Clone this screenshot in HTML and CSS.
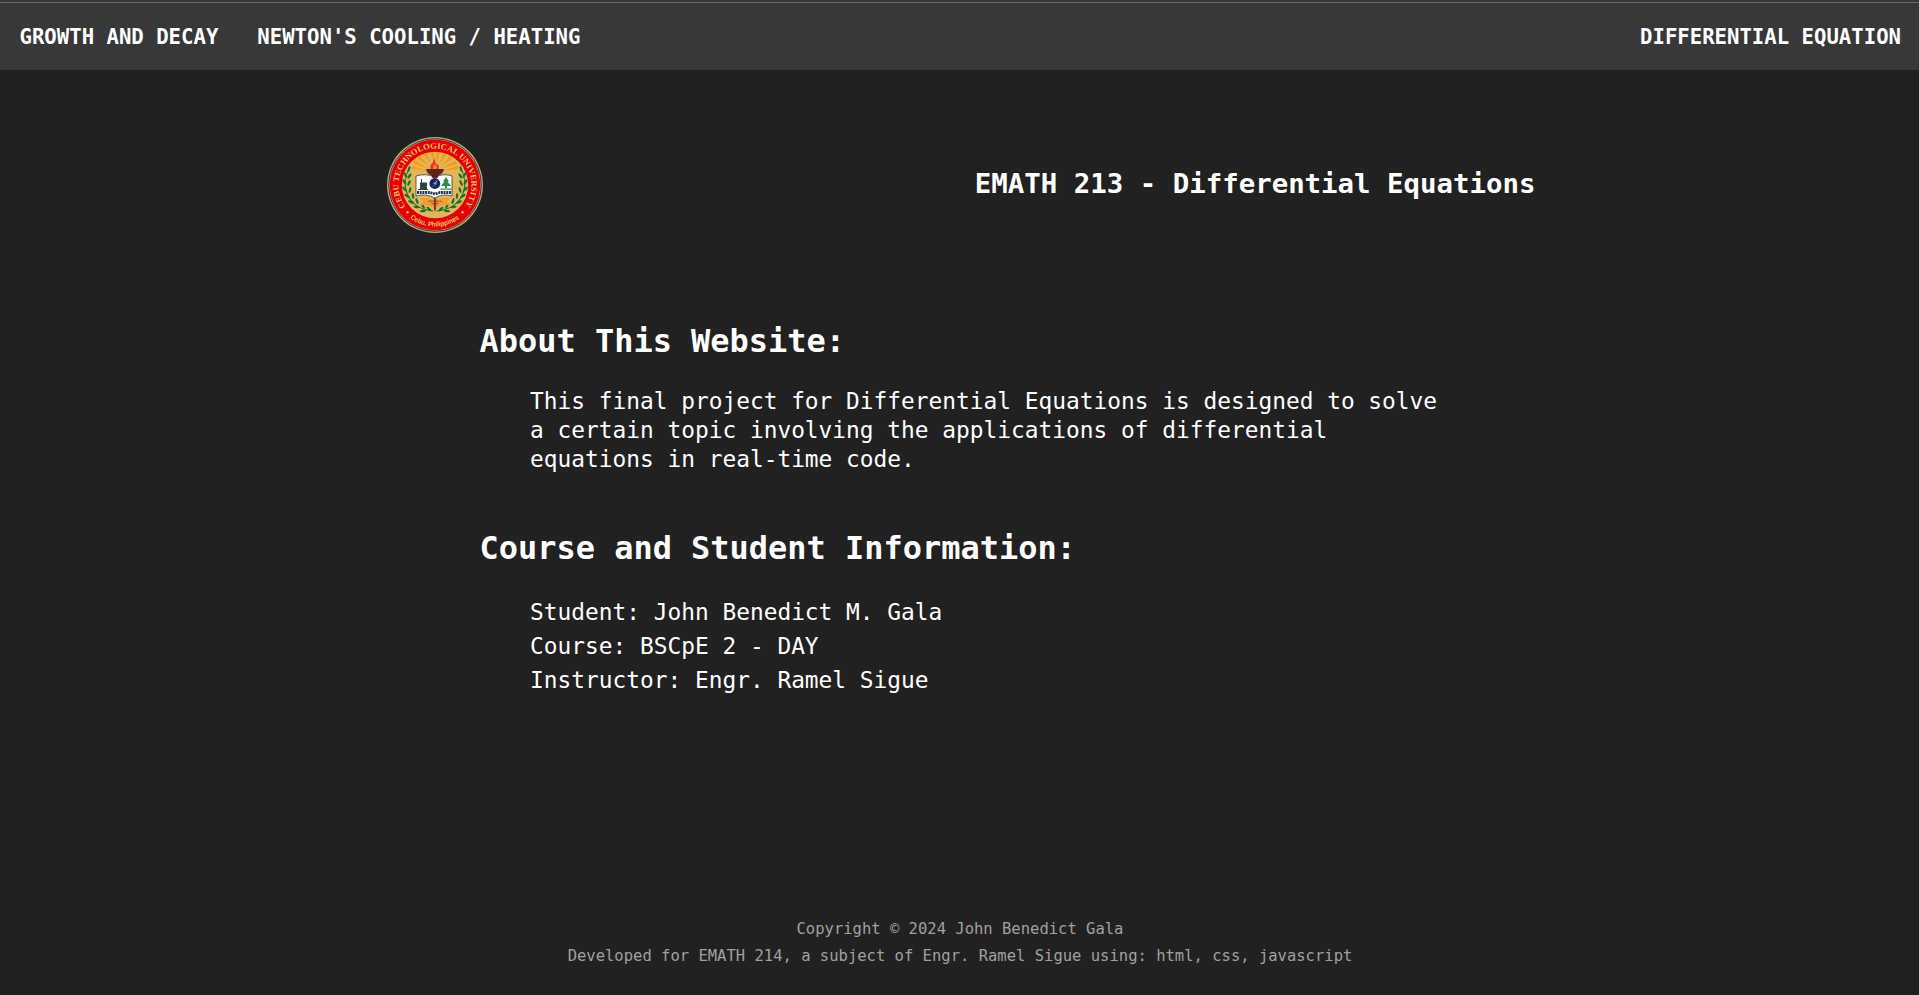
FILE: index.html
```html
<!DOCTYPE html>
<html lang="en">
<head>
<meta charset="utf-8">
<title>Differential Equation</title>
<link rel="stylesheet" href="styles.css">
</head>
<body>
<nav class="nav">
  <div class="nav-links"><a>GROWTH AND DECAY</a><a>NEWTON'S COOLING / HEATING</a></div>
  <a class="brand">DIFFERENTIAL EQUATION</a>
</nav>
<header class="header">
  <svg class="seal" viewBox="0 0 98 98" role="img" aria-label="Cebu Technological University">
    <defs>
      <path id="arc-top" d="M19.500 70.500A36.500 36.500 0 1 1 78.500 70.500"/>
      <path id="arc-bottom" d="M24.200 82.300A41.500 41.500 0 0 0 73.800 82.300"/>
      <ellipse id="leaf" rx="3.100" ry="1.200"/>
      <g id="branch">
        <path d="M24 31C14 47 19 72 47 75" fill="none" stroke="#16722b" stroke-width="1.100"/>
        <use href="#leaf" transform="translate(23 33) rotate(-75)"/><use href="#leaf" transform="translate(19.500 39) rotate(60)"/><use href="#leaf" transform="translate(23.500 40) rotate(-55)"/><use href="#leaf" transform="translate(18.500 46) rotate(55)"/><use href="#leaf" transform="translate(23 47) rotate(-65)"/><use href="#leaf" transform="translate(18.500 53) rotate(50)"/><use href="#leaf" transform="translate(24 54) rotate(-75)"/><use href="#leaf" transform="translate(21 60) rotate(35)"/><use href="#leaf" transform="translate(27 60) rotate(-95)"/><use href="#leaf" transform="translate(25 66) rotate(20)"/><use href="#leaf" transform="translate(31 65) rotate(-110)"/><use href="#leaf" transform="translate(30.500 71) rotate(10)"/><use href="#leaf" transform="translate(37 70) rotate(60)"/><use href="#leaf" transform="translate(37 75) rotate(-5)"/><use href="#leaf" transform="translate(43 73) rotate(40)"/>
      </g>
    </defs>
    <circle cx="49" cy="49" r="48" fill="#c6aa68"/>
    <circle cx="49" cy="49" r="46.300" fill="none" stroke="#38345e" stroke-width="1"/>
    <circle cx="49" cy="49" r="45.200" fill="#e3000b"/>
    <circle cx="49" cy="49" r="33.200" fill="#e0b65c"/>
    <path d="M42 35 26 32.500v-2.500zM43 33 26.500 27l1.800-3zM44 31 31 22l2.600-2.200zM45.500 29 37.500 18l3-1.200zM47.500 27 44.500 16h3.200zM50.500 27l.2-11h3.300zM52.500 29 57.500 17l3 1.400zM54 31 64.500 20l2.400 2.300zM55 33 69.500 24.500l1.500 3zM56 35 71.500 30l.3 2.700z" fill="#ff9610"/>
    <use href="#branch" fill="#16722b"/>
    <use href="#branch" fill="#16722b" transform="matrix(-1 0 0 1 98 0)"/>
    <path d="M30 40q10-3 19 1 9-4 17-1v20q-9-3-17 2-9-5-19-2z" fill="#fff" stroke="#35373e" stroke-width=".8"/>
    <path d="M31 56.500h13l5 1.500 5-1.500h11" fill="none" stroke="#26364c" stroke-width="2.800" stroke-dasharray="2 .7"/>
    <path d="M34 46.500h7v7h-7zM35 43h1v4h-1zM32 53h10v1H32z" fill="#29463f"/>
    <path d="M60 41l-3 4.500h1.500L55 50h4v3h2v-3h4l-3.500-4.500H63zM54.500 52.500h11v1.200h-11z" fill="#2d8c4c"/>
    <circle cx="48.800" cy="47.500" r="5.400" fill="#122377"/>
    <path d="M45.500 51.500 50 47.500l-3 .5 5-4.500-2.500 4 2-.2z" fill="#e7dc39"/>
    <path d="M34 62h8q7 3 14 0h8l-3 3.500 3 3.500h-8l-3 2h-8l-3-2h-8l3-3.500z" fill="#f09b38"/>
    <path d="M47.800 62h2.400v11l-1.200 3-1.200-3z" fill="#8b3d1c"/>
    <path d="M42.500 65.200h13M45.500 67.700h7" stroke="#713c1c" stroke-width="1" stroke-dasharray="1 .4"/>
    <path d="M40 33h18q-1 5-5 6l-1.500 3h-5L45 39q-4-1-5-6z" fill="#5b251b"/>
    <path d="M44.500 33q-1-4 2-6l2-5 1 5q5 2 3 6z" fill="#e93a18"/>
    <path d="M47 33q0-3 2-5 3 3 1 5z" fill="#f58b21"/>
    <text class="seal-top"><textPath href="#arc-top" textLength="159" lengthAdjust="spacingAndGlyphs">CEBU TECHNOLOGICAL UNIVERSITY</textPath></text>
    <text class="seal-bottom"><textPath href="#arc-bottom" textLength="52.5" lengthAdjust="spacingAndGlyphs">Cebu, Philippines</textPath></text>
    <circle cx="21.500" cy="76.300" r="1.200" fill="#f1bd52"/><circle cx="76.500" cy="76.300" r="1.200" fill="#f1bd52"/>
  </svg>
  <h1 class="title">EMATH 213 - Differential Equations</h1>
</header>
<main class="main">
  <h2>About This Website:</h2>
  <p>This final project for Differential Equations is designed to solve a certain topic involving the applications of differential equations in real-time code.</p>
  <h2>Course and Student Information:</h2>
  <ul><li>Student: John Benedict M. Gala</li><li>Course: BSCpE 2 - DAY</li><li>Instructor: Engr. Ramel Sigue</li></ul>
</main>
<footer class="footer">
  <div>Copyright © 2024 John Benedict Gala</div>
  <div>Developed for EMATH 214, a subject of Engr. Ramel Sigue using: html, css, javascript</div>
</footer>
</body>
</html>
```
FILE: styles.css
```css
* { box-sizing: border-box; margin: 0; padding: 0; }
body {
  height: 995px;
  display: flex;
  flex-direction: column;
  overflow: hidden;
  background: #212121;
  color: #fff;
  font-family: "DejaVu Sans Mono", monospace;
}
.nav {
  height: 70px;
  padding: 3px 18px 0 19.5px;
  display: flex;
  align-items: center;
  justify-content: space-between;
  background: linear-gradient(#383838 2px, #666 2px, #666 3px, #383838 3px);
  font-size: 20.65px;
  font-weight: bold;
}
.nav-links { display: flex; gap: 39px; }
.header {
  height: 230px;
  width: 1152px;
  padding-left: 2px;
  margin: 0 auto;
  display: flex;
  align-items: center;
  justify-content: space-between;
}
.seal { width: 98px; height: 98px; }
.seal-top { font: bold 8.2px "Liberation Serif", serif; fill: #f6c75c; }
.seal-bottom { font: bold 6.8px "Liberation Sans", sans-serif; fill: #f6c75c; }
.title { font-size: 27.4px; padding-bottom: 4px; }
.main { width: 960px; margin: 0 auto; }
.main h2 { font-size: 31.96px; line-height: 40px; padding-top: 21px; }
.main p { margin: 26px 0 33px 50.5px; font-size: 22.83px; line-height: 29px; }
.main ul { margin: 27px 0 0 50.5px; list-style: none; font-size: 22.83px; line-height: 34px; }
.footer {
  margin-top: auto;
  padding: 0 0 25px 1px;
  text-align: center;
  color: #a0a0a0;
  font-size: 15.52px;
  line-height: 27px;
}
```
